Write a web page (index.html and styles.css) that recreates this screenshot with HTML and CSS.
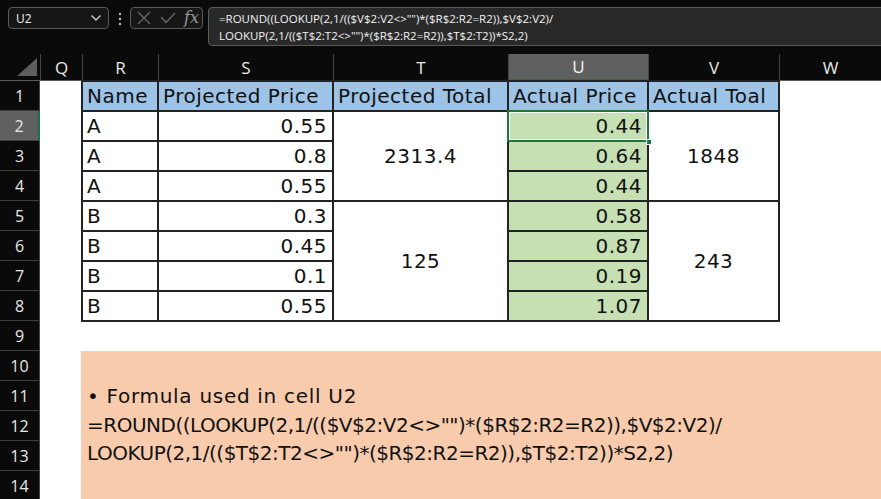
FILE: index.html
```html
<!DOCTYPE html>
<html>
<head>
<meta charset="utf-8">
<link rel="stylesheet" href="styles.css">
</head>
<body>
<div class="topbar">
  <div class="namebox">
    <span>U2</span>
    <svg class="chev" width="12" height="8" viewBox="0 0 12 8"><path d="M1.5 1.5 L6 6 L10.5 1.5" fill="none" stroke="#d0d0d0" stroke-width="1.4"/></svg>
  </div>
  <svg class="dots" width="4" height="14" viewBox="0 0 4 14"><circle cx="2" cy="2" r="1.2" fill="#bbb"/><circle cx="2" cy="7" r="1.2" fill="#bbb"/><circle cx="2" cy="12" r="1.2" fill="#bbb"/></svg>
  <div class="fxbox">
    <svg width="14" height="14" viewBox="0 0 14 14"><path d="M1 1 L13 13 M13 1 L1 13" stroke="#6a6a6a" stroke-width="1.3" fill="none"/></svg>
    <svg width="16" height="12" viewBox="0 0 16 12"><path d="M1 5 L6 10.5 L15 1" stroke="#6a6a6a" stroke-width="1.3" fill="none"/></svg>
    <span class="fx">fx</span>
  </div>
  <div class="formula">=ROUND((LOOKUP(2,1/(($V$2:V2&lt;&gt;"")*($R$2:R2=R2)),$V$2:V2)/<br>LOOKUP(2,1/(($T$2:T2&lt;&gt;"")*($R$2:R2=R2)),$T$2:T2))*S2,2)</div>
</div>

<div class="sheet">
  <div class="corner"><span class="tri"></span></div>
  <div class="colh">Q</div>
  <div class="colh">R</div>
  <div class="colh">S</div>
  <div class="colh">T</div>
  <div class="colh sel">U</div>
  <div class="colh">V</div>
  <div class="colh">W</div>

  <div class="rowh">1</div>
  <div class="rowh sel">2</div>
  <div class="rowh">3</div>
  <div class="rowh">4</div>
  <div class="rowh">5</div>
  <div class="rowh">6</div>
  <div class="rowh">7</div>
  <div class="rowh">8</div>
  <div class="rowh">9</div>
  <div class="rowh">10</div>
  <div class="rowh">11</div>
  <div class="rowh">12</div>
  <div class="rowh">13</div>
  <div class="rowh">14</div>

  <div class="table">
    <div class="c hd">Name</div>
    <div class="c hd">Projected Price</div>
    <div class="c hd">Projected Total</div>
    <div class="c hd">Actual Price</div>
    <div class="c hd">Actual Toal</div>

    <div class="c r">A</div>
    <div class="c s num">0.55</div>
    <div class="c t mid m1">2313.4</div>
    <div class="c u num g active">0.44</div>
    <div class="c v mid m1">1848</div>

    <div class="c r">A</div>
    <div class="c s num">0.8</div>
    <div class="c u num g">0.64</div>

    <div class="c r">A</div>
    <div class="c s num">0.55</div>
    <div class="c u num g">0.44</div>

    <div class="c r">B</div>
    <div class="c s num">0.3</div>
    <div class="c t mid m2">125</div>
    <div class="c u num g">0.58</div>
    <div class="c v mid m2">243</div>

    <div class="c r">B</div>
    <div class="c s num">0.45</div>
    <div class="c u num g">0.87</div>

    <div class="c r">B</div>
    <div class="c s num">0.1</div>
    <div class="c u num g">0.19</div>

    <div class="c r">B</div>
    <div class="c s num">0.55</div>
    <div class="c u num g">1.07</div>
  </div>

  <div class="note"><span class="lead">• Formula used in cell U2</span><br>=ROUND((LOOKUP(2,1/(($V$2:V2&lt;&gt;"")*($R$2:R2=R2)),$V$2:V2)/<br>LOOKUP(2,1/(($T$2:T2&lt;&gt;"")*($R$2:R2=R2)),$T$2:T2))*S2,2)</div>
</div>
</body>
</html>
```

FILE: styles.css
```css
html, body {
  margin: 0;
  padding: 0;
  background: #0a0a0a;
  width: 881px;
  height: 499px;
  overflow: hidden;
}

.topbar {
  height: 54px;
  box-sizing: border-box;
  display: flex;
  align-items: flex-start;
  padding: 7px 0 0 8px;
  background: #0a0a0a;
  font-family: "Open Sans", "Noto Sans", sans-serif;
}

.namebox {
  width: 101px;
  height: 22px;
  box-sizing: border-box;
  border: 1px solid #5a5a5a;
  border-radius: 4px;
  background: #161616;
  display: flex;
  align-items: center;
  justify-content: space-between;
  padding: 0 6px 0 7px;
  color: #f0f0f0;
  font-size: 12px;
}

.dots {
  margin: 5px 8px 0 9px;
}

.fxbox {
  width: 73px;
  height: 22px;
  box-sizing: border-box;
  border: 1px solid #5a5a5a;
  border-radius: 4px;
  background: #161616;
  display: flex;
  align-items: center;
  gap: 9px;
  padding: 0 0 0 6px;
}

.fx {
  font-family: "DejaVu Serif", "Liberation Serif", serif;
  font-style: italic;
  font-size: 16px;
  color: #9a9a9a;
  line-height: 1;
  margin-left: -1px;
}

.formula {
  flex: 1;
  margin-left: 5px;
  margin-right: -6px;
  height: 39px;
  box-sizing: border-box;
  border: 1px solid #5a5a5a;
  border-radius: 4px;
  background: #292929;
  color: #f2f2f2;
  font-size: 11.5px;
  line-height: 17px;
  padding: 2px 0 0 10px;
}

.sheet {
  display: grid;
  grid-template-columns: 40px 42px 76px 175px 175px 140px 131px 102px;
  grid-template-rows: 27px repeat(14, 30px);
  background: #ffffff;
  font-family: "Open Sans", "Noto Sans", sans-serif;
}

.corner {
  grid-column: 1;
  grid-row: 1;
  background: #0a0a0a;
  position: relative;
  border-bottom: 1px solid #5a5a5a;
  box-sizing: border-box;
}

.tri {
  position: absolute;
  right: 3px;
  bottom: 4px;
  width: 0;
  height: 0;
  border-left: 20px solid transparent;
  border-bottom: 18px solid #5e5e5e;
}

.colh {
  grid-row: 1;
  background: #0a0a0a;
  color: #e8e8e8;
  font-size: 17px;
  display: flex;
  align-items: center;
  justify-content: center;
  border-left: 1px solid #444;
  border-bottom: 1px solid #5a5a5a;
  box-sizing: border-box;
}

.colh.sel {
  background: #606060;
  border-bottom: 2px solid #1f7244;
  color: #f5f5f5;
}

.rowh {
  grid-column: 1;
  background: #0a0a0a;
  color: #e8e8e8;
  font-size: 16px;
  display: flex;
  align-items: center;
  justify-content: center;
  border-bottom: 1px solid #3d3d3d;
  border-right: 1px solid #444;
  box-sizing: border-box;
}

.rowh.sel {
  background: #606060;
  border-right: 2px solid #1f7244;
}

.table {
  grid-column: 3 / 8;
  grid-row: 2 / 10;
  margin: -1px;
  border: 2px solid #232323;
  background: #232323;
  display: grid;
  grid-template-columns: 74px 173px 173px 138px 129px;
  grid-template-rows: repeat(8, 28px);
  gap: 2px;
  font-family: "DejaVu Sans", sans-serif;
  font-size: 20px;
  letter-spacing: 0.5px;
  color: #111;
}

.c {
  background: #fff;
  display: flex;
  align-items: center;
  padding: 0 4px;
  white-space: nowrap;
  position: relative;
}

.c.r { grid-column: 1; }
.c.s { grid-column: 2; }
.c.t { grid-column: 3; }
.c.u { grid-column: 4; }
.c.v { grid-column: 5; }

.c.hd {
  background: #9dc3e6;
}

.c.num {
  justify-content: flex-end;
  padding-right: 5px;
}

.c.g {
  background: #c6e0b4;
}

.c.mid {
  justify-content: center;
}

.c.m1 { grid-row: span 3; }
.c.m2 { grid-row: span 4; }

.c.active::after {
  content: "";
  position: absolute;
  left: -2px;
  top: -2px;
  right: -2px;
  bottom: -2px;
  border: 2px solid #217346;
  box-shadow: inset 0 0 0 1px #ffffff;
}

.c.active::before {
  content: "";
  position: absolute;
  right: -5px;
  bottom: -5px;
  width: 6px;
  height: 6px;
  background: #217346;
  border: 1px solid #fff;
  box-sizing: border-box;
  z-index: 2;
}

.note {
  grid-column: 3 / 9;
  grid-row: 11 / 16;
  margin-left: -1px;
  background: #f8cbad;
  font-family: "DejaVu Sans", sans-serif;
  font-size: 20px;
  letter-spacing: -0.5px;
  line-height: 28.5px;
  color: #111;
  padding: 31px 0 0 6px;
  white-space: nowrap;
}

.note .lead {
  letter-spacing: 0.7px;
}
```
